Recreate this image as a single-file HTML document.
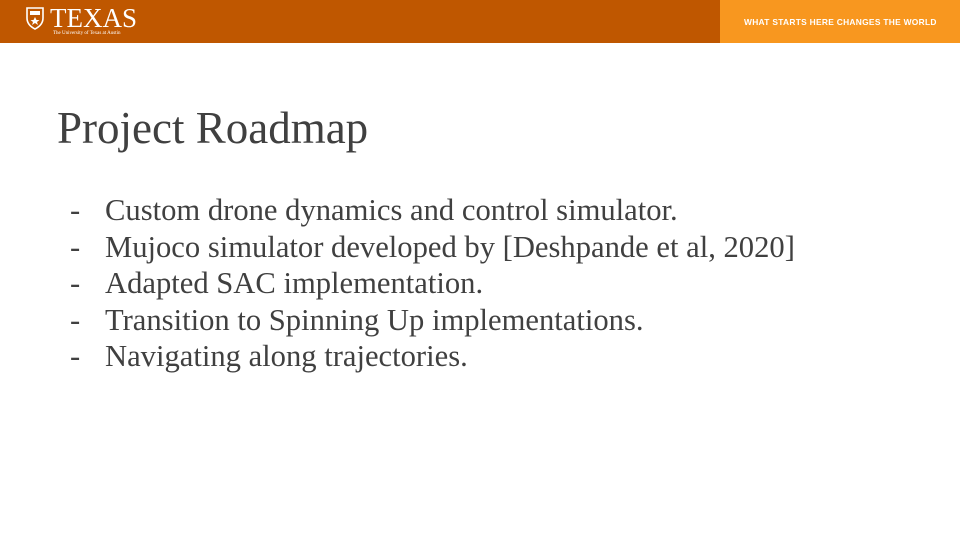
<!DOCTYPE html>
<html><head><style>
body{margin:0;width:960px;height:540px;position:relative;background:#fff;overflow:hidden;font-family:"Liberation Serif",serif}
.bar{position:absolute;left:0;top:0;width:720px;height:43px;background:#bf5700}
.bar2{position:absolute;left:720px;top:0;width:240px;height:43px;background:#f8971f}
.tag{position:absolute;left:744px;top:17px;font:bold 8.4px "Liberation Sans",sans-serif;color:#fff;letter-spacing:0.3px}
.tx{position:absolute;left:50px;top:3px;color:#fff;font-size:27px;line-height:30px}
.sub{position:absolute;left:53px;top:31px;color:#fff;font-size:5px}
h1{position:absolute;left:57px;top:103px;margin:0;font-weight:normal;font-size:45px;color:#404040;line-height:50px}
ul{position:absolute;left:70px;top:192px;margin:0;padding:0;list-style:none;font-size:30.6px;color:#404040}
li{height:36.5px;line-height:36px}
li span{display:inline-block;width:35px}
</style></head><body>
<div class="bar"></div><div class="bar2"></div>
<svg style="position:absolute;left:26px;top:7px" width="18" height="23" viewBox="0 0 18 23"><path d="M1 1h16v10c0 6-4 9-8 11C5 20 1 17 1 11z" fill="none" stroke="#fff" stroke-width="1.6"/><rect x="4" y="4" width="10" height="4" fill="#fff"/><path d="M9 10l1.5 3h3l-2.5 2 1 3-3-2-3 2 1-3-2.5-2h3z" fill="#fff"/></svg>
<div class="tx">TEXAS</div>
<div class="sub">The University of Texas at Austin</div>
<div class="tag">WHAT STARTS HERE CHANGES THE WORLD</div>
<h1>Project Roadmap</h1>
<ul>
<li><span>-</span>Custom drone dynamics and control simulator.</li>
<li><span>-</span>Mujoco simulator developed by [Deshpande et al, 2020]</li>
<li><span>-</span>Adapted SAC implementation.</li>
<li><span>-</span>Transition to Spinning Up implementations.</li>
<li><span>-</span>Navigating along trajectories.</li>
</ul>
</body></html>
